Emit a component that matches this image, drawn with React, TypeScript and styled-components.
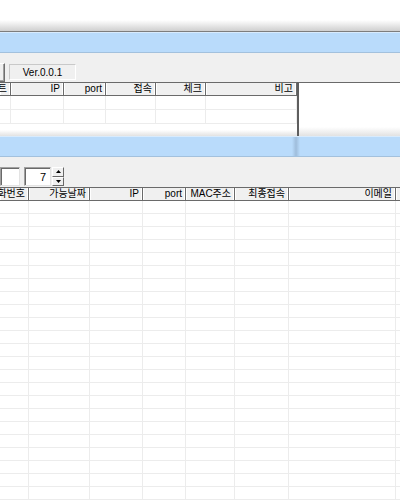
import styled, { createGlobalStyle } from 'styled-components'

const GlobalStyle = createGlobalStyle`
  html, body {
    margin: 0;
    padding: 0;
    background: #ffffff;
    overflow: hidden;
  }
  body {
    font-family: "Liberation Sans", "Noto Sans CJK KR", sans-serif;
    font-size: 10px;
    color: #000;
  }
`

const Screen = styled.div`
  width: 400px;
  height: 500px;
  overflow: hidden;
  display: flex;
  flex-direction: column;
`

const TopArea = styled.div`
  height: 31px;
  flex-shrink: 0;
  background: linear-gradient(to bottom, #ffffff 0, #ffffff 20px, #cfcfcf 31px);
  border-bottom: 1px solid #7d7d7d;
`

const TitleBar = styled.div<{ $splitter?: boolean }>`
  height: 21px;
  flex-shrink: 0;
  box-sizing: border-box;
  box-shadow: inset 0 1px 0 #d8ebfd;
  border-bottom: 1px solid #a3c1dd;
  background: ${(p) =>
    p.$splitter
      ? 'linear-gradient(to right, #b9dbfb 0, #b9dbfb 292px, #9fbddb 296px, #b9dbfb 300px, #b9dbfb 100%)'
      : '#b9dbfb'};
`

const Toolbar = styled.div<{ $h: number }>`
  height: ${(p) => p.$h}px;
  flex-shrink: 0;
  background: #f0f0f0;
  display: flex;
  align-items: flex-end;
  box-sizing: border-box;
`

const EdgeButton = styled.div`
  width: 5px;
  height: 19px;
  box-sizing: border-box;
  background: #f0f0f0;
  border-top: 1px solid #ffffff;
  border-right: 1px solid #6f6f6f;
  border-bottom: 1px solid #6f6f6f;
  box-shadow: inset -1px -1px 0 #a0a0a0;
`

const VerBox = styled.div`
  width: 67px;
  height: 16px;
  margin-left: 4px;
  margin-bottom: 2px;
  box-sizing: border-box;
  border: 1px solid #c9c9c9;
  border-right-color: #ffffff;
  border-bottom-color: #ffffff;
  display: flex;
  align-items: center;
  justify-content: center;
  font-size: 10px;
`

const TextField = styled.div<{ $w: number; $ml?: number }>`
  width: ${(p) => p.$w}px;
  height: 19px;
  margin-left: ${(p) => p.$ml ?? 0}px;
  margin-bottom: 1px;
  box-sizing: border-box;
  background: #ffffff;
  border-top: 1px solid #a0a0a0;
  border-left: 1px solid #a0a0a0;
  border-right: 1px solid #e3e3e3;
  border-bottom: 1px solid #e3e3e3;
  box-shadow: inset 1px 1px 0 #696969;
  display: flex;
  align-items: center;
  justify-content: flex-end;
  padding-right: 4px;
  font-size: 11px;
`

const Spinner = styled.div`
  width: 12px;
  height: 19px;
  margin-bottom: 1px;
  margin-left: 1px;
  display: flex;
  flex-direction: column;
`

const SpinBtn = styled.div`
  flex: 1;
  box-sizing: border-box;
  background: #f0f0f0;
  border-top: 1px solid #ffffff;
  border-left: 1px solid #ffffff;
  border-right: 1px solid #696969;
  border-bottom: 1px solid #696969;
  display: flex;
  align-items: center;
  justify-content: center;
`

const ListRow = styled.div`
  display: flex;
  height: 54px;
  flex-shrink: 0;
`

const List = styled.div<{ $w?: number }>`
  width: ${(p) => (p.$w ? `${p.$w}px` : 'auto')};
  flex: ${(p) => (p.$w ? '0 0 auto' : '1')};
  box-sizing: border-box;
  border-top: 1px solid #6a6a6a;
  background: #ffffff;
  overflow: hidden;
  display: flex;
  flex-direction: column;
`

const SidePanel = styled.div`
  flex: 1;
  box-sizing: border-box;
  border-top: 1px solid #6a6a6a;
  border-left: 2px solid #5e5e5e;
  background: linear-gradient(to bottom, #ffffff 0, #ffffff 44px, #e2e2e2 53px);
`

const ListFooter = styled.div`
  flex: 1;
  background: linear-gradient(to bottom, rgba(255, 255, 255, 0) 0, rgba(255, 255, 255, 0) 6px, #e2e2e2 100%);
`

const HeaderRow = styled.div`
  display: flex;
  height: 13px;
  flex-shrink: 0;
  box-sizing: border-box;
  border-bottom: 1px solid #6a6a6a;
  background: #f0f0f0;
`

const HeaderCell = styled.div<{ $w: number }>`
  width: ${(p) => p.$w}px;
  flex-shrink: 0;
  box-sizing: border-box;
  border-right: 1px solid #6a6a6a;
  box-shadow: inset -1px 0 0 #ffffff, inset 1px 0 0 #ffffff;
  display: flex;
  align-items: center;
  justify-content: flex-end;
  padding-right: 3px;
  overflow: hidden;
  white-space: nowrap;
  line-height: 12px;
`

const Row = styled.div<{ $h: number }>`
  display: flex;
  height: ${(p) => p.$h}px;
  flex-shrink: 0;
  box-sizing: border-box;
  border-bottom: 1px solid #ececec;
`

const Cell = styled.div<{ $w: number }>`
  width: ${(p) => p.$w}px;
  flex-shrink: 0;
  box-sizing: border-box;
  border-right: 1px solid #ececec;
`

const TopCols = [
  { label: '호스트', w: 11 },
  { label: 'IP', w: 53 },
  { label: 'port', w: 42 },
  { label: '접속', w: 50 },
  { label: '체크', w: 50 },
  { label: '비고', w: 91 },
]

const BottomCols = [
  { label: '전화번호', w: 29 },
  { label: '가능날짜', w: 61 },
  { label: 'IP', w: 53 },
  { label: 'port', w: 43 },
  { label: 'MAC주소', w: 49 },
  { label: '최종접속', w: 54 },
  { label: '이메일', w: 107 },
  { label: '', w: 40 },
]

const Arrow = ({ up }: { up?: boolean }) => (
  <svg width="5" height="3" viewBox="0 0 5 3">
    <path d={up ? 'M2.5 0 L5 3 L0 3 Z' : 'M0 0 L5 0 L2.5 3 Z'} fill="#000" />
  </svg>
)

const Grid = ({
  cols,
  rows,
  rowH,
}: {
  cols: { label: string; w: number }[]
  rows: number
  rowH: number
}) => (
  <>
    <HeaderRow>
      {cols.map((c, i) => (
        <HeaderCell key={i} $w={c.w}>
          {c.label}
        </HeaderCell>
      ))}
    </HeaderRow>
    {Array.from({ length: rows }).map((_, r) => (
      <Row key={r} $h={rowH}>
        {cols.map((c, i) => (
          <Cell key={i} $w={c.w} />
        ))}
      </Row>
    ))}
  </>
)

export default function App() {
  return (
    <Screen>
      <GlobalStyle />
      <TopArea />
      <TitleBar />
      <Toolbar $h={29}>
        <EdgeButton />
        <VerBox>Ver.0.0.1</VerBox>
      </Toolbar>
      <ListRow>
        <List $w={297}>
          <Grid cols={TopCols} rows={2} rowH={14} />
          <ListFooter />
        </List>
        <SidePanel />
      </ListRow>
      <TitleBar $splitter />
      <Toolbar $h={30}>
        <TextField $w={20} />
        <TextField $w={27} $ml={4}>
          7
        </TextField>
        <Spinner>
          <SpinBtn>
            <Arrow up />
          </SpinBtn>
          <SpinBtn>
            <Arrow />
          </SpinBtn>
        </Spinner>
      </Toolbar>
      <List>
        <Grid cols={BottomCols} rows={24} rowH={13} />
      </List>
    </Screen>
  )
}
